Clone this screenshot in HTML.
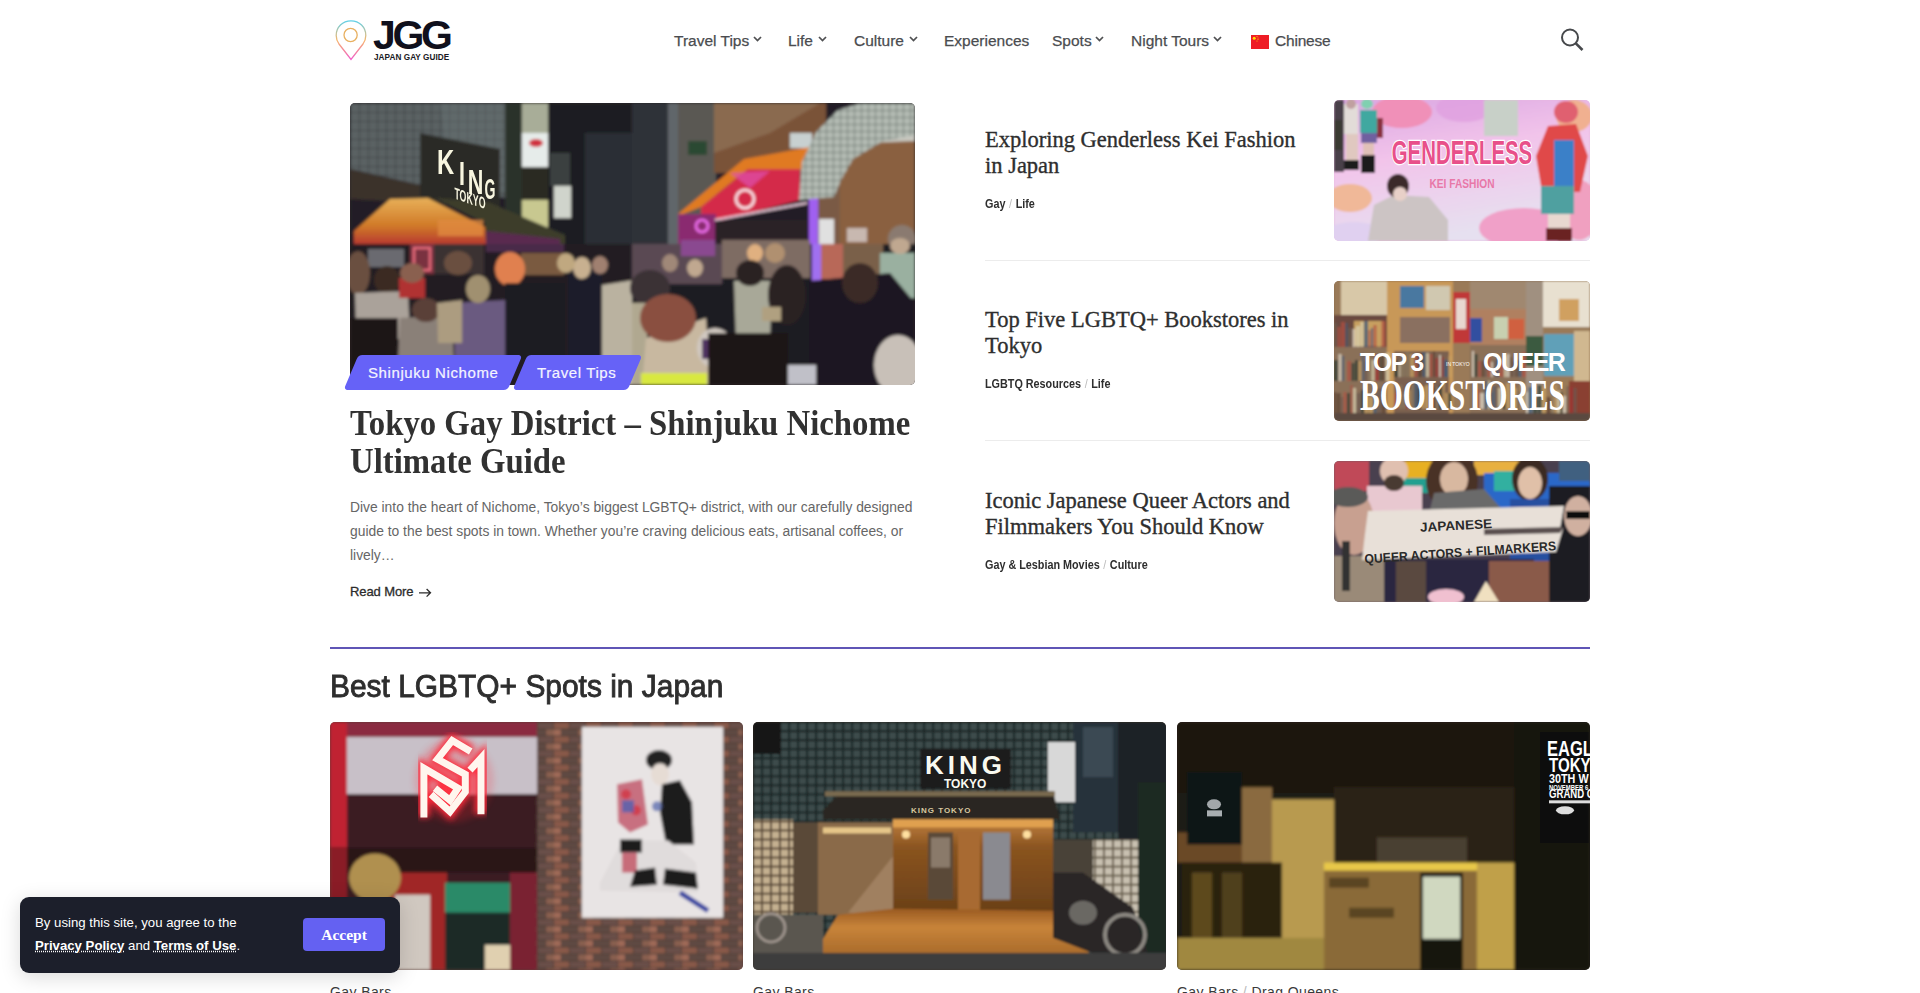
<!DOCTYPE html>
<html><head><meta charset="utf-8">
<style>
*{margin:0;padding:0;box-sizing:border-box}
html,body{width:1920px;height:993px;overflow:hidden;background:#fff}
body{font-family:"Liberation Sans",sans-serif;color:#333;position:relative}
.abs{position:absolute}
.nav{position:absolute;top:32px;font-size:15.5px;color:#4a4c4f;white-space:nowrap;line-height:18px;-webkit-text-stroke:0.25px #4a4c4f}
.chev{position:absolute;top:36px;width:9px;height:6px}
.ph{position:absolute;overflow:hidden;border-radius:5px;background:#333}
.ph > div{position:absolute}
.rt{position:absolute;left:985px;width:340px;font-family:"Liberation Serif",serif;font-size:22.5px;line-height:26px;color:#2e2e2e;-webkit-text-stroke:0.35px #2e2e2e;white-space:nowrap}
.meta{position:absolute;left:985px;font-size:12px;font-weight:700;color:#2e2e2e;white-space:nowrap;transform:scaleX(0.9);transform-origin:0 0;line-height:14px}
.meta i{font-style:normal;color:#bbb;font-weight:400;margin:0 4px}
.div{position:absolute;left:985px;width:605px;height:1px;background:#ececec}
.tag{position:absolute;top:355px;height:35px;background:#6662f7;transform:skewX(-23deg);border-radius:4px}
.tagt{position:absolute;top:364px;font-size:15px;color:#f4f4ff;letter-spacing:0.6px;white-space:nowrap;line-height:18px;-webkit-text-stroke:0.2px #f4f4ff}
.card{position:absolute;top:722px;width:413px;height:248px;border-radius:5px;overflow:hidden}
.cap{position:absolute;top:984px;font-size:14px;color:#3a3a3a;white-space:nowrap;letter-spacing:0.4px}
</style></head><body>

<!-- Logo -->
<svg class="abs" style="left:333px;top:18px" width="36" height="44" viewBox="0 0 36 44">
<defs><linearGradient id="lg" x1="0" y1="0" x2="0" y2="1">
<stop offset="0" stop-color="#5fd0e8"/><stop offset="0.5" stop-color="#f6b66a"/><stop offset="1" stop-color="#f05cc8"/></linearGradient></defs>
<path d="M18 2.8 C9.6 2.8 3.2 9.2 3.2 17.4 C3.2 20.6 4.2 23.4 6 26 L18 41.4 L30 26 C31.8 23.4 32.8 20.6 32.8 17.4 C32.8 9.2 26.4 2.8 18 2.8 Z" fill="none" stroke="url(#lg)" stroke-width="1.3"/>
<circle cx="17.6" cy="17" r="6.6" fill="none" stroke="#e8b060" stroke-width="1.3"/>
</svg>
<div class="abs" style="left:373px;top:12px;font-size:41px;font-weight:700;color:#10101c;letter-spacing:-3.4px;line-height:46px">JGG</div>
<div class="abs" style="left:374px;top:53px;font-size:8.2px;font-weight:700;color:#1a1a24;line-height:10px;letter-spacing:0.05px">JAPAN GAY GUIDE</div>

<!-- Nav -->
<div class="nav" style="left:674px">Travel Tips</div>
<div class="nav" style="left:788px">Life</div>
<div class="nav" style="left:854px">Culture</div>
<div class="nav" style="left:944px">Experiences</div>
<div class="nav" style="left:1052px">Spots</div>
<div class="nav" style="left:1131px">Night Tours</div>
<div class="nav" style="left:1275px;letter-spacing:-0.2px">Chinese</div>
<svg class="chev" style="left:753px" viewBox="0 0 9 6"><path d="M1 1 L4.5 4.6 L8 1" fill="none" stroke="#4f5052" stroke-width="1.7"/></svg>
<svg class="chev" style="left:818px" viewBox="0 0 9 6"><path d="M1 1 L4.5 4.6 L8 1" fill="none" stroke="#4f5052" stroke-width="1.7"/></svg>
<svg class="chev" style="left:909px" viewBox="0 0 9 6"><path d="M1 1 L4.5 4.6 L8 1" fill="none" stroke="#4f5052" stroke-width="1.7"/></svg>
<svg class="chev" style="left:1095px" viewBox="0 0 9 6"><path d="M1 1 L4.5 4.6 L8 1" fill="none" stroke="#4f5052" stroke-width="1.7"/></svg>
<svg class="chev" style="left:1213px" viewBox="0 0 9 6"><path d="M1 1 L4.5 4.6 L8 1" fill="none" stroke="#4f5052" stroke-width="1.7"/></svg>
<svg class="abs" style="left:1251px;top:35px" width="18" height="14" viewBox="0 0 18 14"><rect width="18" height="14" fill="#ee1c25"/><circle cx="3.2" cy="3.2" r="1.5" fill="#ffde00"/><circle cx="6" cy="1.6" r=".5" fill="#ffde00"/><circle cx="7" cy="3" r=".5" fill="#ffde00"/><circle cx="7" cy="4.6" r=".5" fill="#ffde00"/><circle cx="6" cy="6" r=".5" fill="#ffde00"/></svg>

<!-- Search -->
<svg class="abs" style="left:1558px;top:26px" width="28" height="28" viewBox="0 0 28 28"><circle cx="12" cy="11.5" r="8" fill="none" stroke="#46484b" stroke-width="2"/><path d="M17.8 17.4 L24.5 24" stroke="#46484b" stroke-width="2.6"/></svg>

<!-- Main photo -->
<div class="ph" id="mainph" style="left:350px;top:103px;width:565px;height:282px;background:#2a2628"><svg width="565" height="282" viewBox="0 0 565 282" style="position:absolute;left:0;top:0">
<defs><filter id="b0"><feGaussianBlur stdDeviation="0.5"/></filter><filter id="b1" x="-5%" y="-5%" width="110%" height="110%"><feGaussianBlur stdDeviation="1.6"/></filter>
<linearGradient id="awn" x1="0" y1="0" x2="0" y2="1"><stop offset="0" stop-color="#e8b058"/><stop offset="0.6" stop-color="#d07a28"/><stop offset="1" stop-color="#b83a30"/></linearGradient>
<pattern id="tile" width="9" height="9" patternUnits="userSpaceOnUse"><rect width="9" height="9" fill="#5a6264"/><path d="M0 0H9M0 0V9" stroke="#2e3234" stroke-width="1.2"/></pattern>
<pattern id="tile2" width="7" height="7" patternUnits="userSpaceOnUse"><rect width="7" height="7" fill="#b4bcb4"/><path d="M0 0H7M0 0V7" stroke="#3a4440" stroke-width="1.1"/></pattern>
</defs>
<g filter="url(#b1)">
<rect width="565" height="282" fill="#231f25"/>
<!-- left tile building -->
<polygon points="0,0 155,0 155,95 70,82 0,66" fill="url(#tile)"/>
<polygon points="90,0 155,0 155,90 100,80" fill="#6a7470" opacity=".45"/>
<polygon points="0,66 70,82 72,100 0,96" fill="#3a302c"/>
<!-- KING sign box -->
<polygon points="70,30 150,46 150,112 70,96" fill="#2c2c28"/>
<!-- center top -->
<rect x="155" y="0" width="18" height="141" fill="#2a302c"/>
<!-- vertical signs -->
<rect x="172" y="0" width="26" height="30" fill="#a8ad98"/>
<rect x="172" y="30" width="26" height="34" fill="#e6ecea"/>
<ellipse cx="186" cy="40" rx="7" ry="4" fill="#d03040"/>
<rect x="172" y="64" width="26" height="33" fill="#2a2c24"/>
<rect x="172" y="97" width="26" height="37" fill="#c8c890"/>
<!-- dark right bldg -->
<rect x="198" y="0" width="90" height="141" fill="#1b1d22"/>
<rect x="235" y="30" width="50" height="111" fill="#2b2f35"/>
<rect x="204" y="83" width="17" height="32" fill="#d0d4cc"/>
<rect x="200" y="50" width="20" height="33" fill="#3a4040"/>
<!-- awnings -->
<polygon points="85,95 140,100 215,132 215,145 135,145 135,120" fill="#3c3c2c"/>
<polygon points="4,128 40,96 78,95 135,124 136,141 4,141" fill="url(#awn)"/>
<rect x="88" y="117" width="45" height="16" fill="#e08a40" opacity=".8"/>
<polygon points="136,128 210,136 210,148 136,146" fill="#5a2a50"/>
<!-- TR: grey bldg -->
<rect x="282" y="0" width="46" height="141" fill="#2e3238"/>
<rect x="318" y="0" width="12" height="141" fill="#60666a"/>
<rect x="328" y="0" width="38" height="141" fill="#5a5852"/>
<rect x="338" y="38" width="19" height="14" fill="#2a4a30"/>
<!-- brick bldg -->
<rect x="364" y="0" width="112" height="70" fill="#7a5238"/>
<polygon points="364,0 470,0 420,30 364,50" fill="#8a6a50"/>
<rect x="440" y="30" width="22" height="15" fill="#c8d0d0"/>
<!-- orange awning -->
<polygon points="328,111 394,56 460,44 458,66 398,66 351,104 328,113" fill="#e07a22"/>
<!-- red sign -->
<polygon points="351,104 398,66 450,66 450,97 364,119 351,113" fill="#d42a4a"/>
<polygon points="380,70 420,68 400,85" fill="#e050b0" opacity=".7"/>
<circle cx="395" cy="96" r="9" fill="none" stroke="#fff0f4" stroke-width="2.5"/>
<rect x="328" y="111" width="38" height="30" fill="#8a2a70"/>
<circle cx="352" cy="123" r="6" fill="none" stroke="#f070f0" stroke-width="2.5"/>
<rect x="365" y="117" width="92" height="24" fill="#2c2228"/>
<path d="M365 117 L457 100" stroke="#f0d0e0" stroke-width="2"/>
<rect x="459" y="91" width="9" height="50" fill="#a060f0"/>
<!-- arch & brick -->
<rect x="468" y="36" width="97" height="106" fill="#8a6040"/>
<rect x="468" y="50" width="22" height="92" fill="#7a5a44"/>
<polygon points="515,14 565,10 565,38 515,40" fill="#c8c8c0"/>
<polygon points="449,97 452,59 466,29 488,7 511,0 565,0 565,32 533,38 503,56 491,77 484,94" fill="url(#tile2)"/>
<rect x="469" y="116" width="15" height="25" fill="#e0e0e0"/>
<rect x="497" y="125" width="20" height="14" fill="#c8b8b0"/>
<ellipse cx="552" cy="136" rx="14" ry="14" fill="#8a7a70"/>
<!-- BL crowd -->
<rect x="0" y="141" width="283" height="141" fill="#221c22"/>
<rect x="18" y="146" width="36" height="18" fill="#6a6a70"/>
<rect x="60" y="141" width="24" height="30" fill="#7a3040"/>
<rect x="64" y="145" width="16" height="22" fill="none" stroke="#f07080" stroke-width="2"/>
<rect x="84" y="141" width="50" height="30" fill="#3a3030"/>
<rect x="136" y="141" width="78" height="8" fill="#4a2a48"/>
<rect x="171" y="150" width="43" height="22" fill="#7a5a40"/>
<ellipse cx="160" cy="166" rx="15" ry="17" fill="#e08050"/>
<ellipse cx="37" cy="177" rx="13" ry="14" fill="#3a2a20"/>
<ellipse cx="8" cy="170" rx="12" ry="22" fill="#6a5040"/>
<polygon points="5,190 58,188 60,236 6,236" fill="#aaa29a"/>
<rect x="49" y="175" width="26" height="20" fill="#b03030"/>
<ellipse cx="62" cy="170" rx="12" ry="10" fill="#8a6050"/>
<polygon points="50,215 101,212 104,256 48,256" fill="#8a8078"/>
<ellipse cx="76" cy="207" rx="14" ry="12" fill="#5a4038"/>
<polygon points="103,200 156,197 158,256 105,256" fill="#6a5a80"/>
<ellipse cx="128" cy="186" rx="12" ry="14" fill="#a09070"/>
<polygon points="87,200 112,197 112,240 88,240" fill="#ac9c80"/>
<ellipse cx="108" cy="160" rx="14" ry="12" fill="#6a5040"/>
<polygon points="252,182 290,176 298,282 252,282" fill="#bab2a0"/>
<rect x="218" y="160" width="34" height="96" fill="#1e1e2a"/>
<ellipse cx="232" cy="165" rx="9" ry="11" fill="#c8b090"/>
<ellipse cx="216" cy="160" rx="9" ry="10" fill="#c0a880"/>
<ellipse cx="250" cy="162" rx="8" ry="9" fill="#a08070"/>
<rect x="0" y="215" width="48" height="67" fill="#1a1818"/>
<rect x="155" y="180" width="60" height="76" fill="#1e1a20"/>
<!-- BR crowd -->
<rect x="282" y="141" width="283" height="141" fill="#1e1a22"/>
<rect x="282" y="141" width="90" height="40" fill="#5a4a52"/><rect x="331" y="137" width="34" height="16" fill="#8a4a90"/><ellipse cx="320" cy="160" rx="8" ry="9" fill="#a08878"/><ellipse cx="345" cy="165" rx="8" ry="9" fill="#c0a890"/>
<rect x="372" y="137" width="88" height="38" fill="#7e6c64"/><ellipse cx="425" cy="150" rx="10" ry="10" fill="#b09070"/>
<ellipse cx="405" cy="150" rx="8" ry="9" fill="#e0b080"/>
<rect x="462" y="141" width="9" height="42" fill="#a070f0"/>
<rect x="471" y="141" width="22" height="35" fill="#b86858"/>
<rect x="493" y="141" width="40" height="50" fill="#7a6048"/>
<rect x="530" y="150" width="35" height="45" fill="#9ab0a0"/>
<ellipse cx="550" cy="143" rx="10" ry="8" fill="#c0a890"/>
<polygon points="384,178 422,178 420,240 386,240" fill="#a8a898"/>
<ellipse cx="400" cy="170" rx="14" ry="13" fill="#2a2424"/>
<ellipse cx="437" cy="192" rx="19" ry="30" fill="#2a2024"/><rect x="412" y="204" width="19" height="14" fill="#b0a080"/>
<polygon points="459,178 540,170 565,200 565,282 459,282" fill="#1a1620"/>
<ellipse cx="510" cy="180" rx="18" ry="20" fill="#3a2a26"/>
<ellipse cx="300" cy="185" rx="20" ry="18" fill="#3a3036"/>
<polygon points="282,200 297,200 297,282 282,282" fill="#b0a890"/>
<polygon points="296,235 356,215 360,282 292,282" fill="#c8b8a0"/>
<ellipse cx="318" cy="215" rx="28" ry="24" fill="#8a5040"/>
<ellipse cx="365" cy="245" rx="18" ry="20" fill="#d0c8c0"/>
<rect x="352" y="236" width="14" height="20" fill="#503060"/>
<rect x="291" y="270" width="66" height="12" fill="#d8e840"/>
<rect x="430" y="262" width="36" height="20" fill="#c0c0c8"/>
<ellipse cx="548" cy="262" rx="24" ry="30" fill="#c8c0b8"/>
<rect x="358" y="230" width="80" height="52" fill="#1a1618"/>
</g>
<!-- sharp sign text -->
<g filter="url(#b0)" fill="#f8f6e0" font-family="Liberation Sans" font-weight="700">
<text font-size="35" transform="translate(87 71.4) scale(0.68 1)">K</text>
<text font-size="34" transform="translate(109 82.3) scale(0.63 1)">I</text>
<text font-size="36" transform="translate(117.7 90.7) scale(0.6 1)">N</text>
<text font-size="30" transform="translate(134.6 95.5) scale(0.47 1)">G</text>
<text font-size="16" transform="translate(104.4 95.5) skewY(19) scale(0.55 1)">TOKYO</text>
</g>
</svg>
</div><!--/mainph-->

<div class="tag" style="left:351px;width:164px"></div>
<div class="tag" style="left:520px;width:115px"></div>
<div class="tagt" style="left:368px">Shinjuku Nichome</div>
<div class="tagt" style="left:537px">Travel Tips</div>

<div class="abs" style="left:350px;top:403.5px;width:700px;font-family:'Liberation Serif',serif;font-size:35.5px;font-weight:700;line-height:38.5px;color:#313131;transform:scaleX(0.9226);transform-origin:0 0;white-space:nowrap">Tokyo Gay District – Shinjuku Nichome<br>Ultimate Guide</div>
<div class="abs" style="left:350px;top:495px;width:600px;font-size:13.85px;line-height:24px;color:#666">Dive into the heart of Nichome, Tokyo’s biggest LGBTQ+ district, with our carefully designed<br>guide to the best spots in town. Whether you’re craving delicious eats, artisanal coffees, or<br>lively…</div>
<div class="abs" style="left:350px;top:584px;font-size:13px;color:#2c2c2c;white-space:nowrap;line-height:16px;-webkit-text-stroke:0.3px #2c2c2c;letter-spacing:-0.1px">Read More</div><svg class="abs" style="left:418px;top:587px" width="14" height="12" viewBox="0 0 14 12"><path d="M1 5.8 H12.3 M8.6 2 L12.5 5.8 L8.6 9.6" fill="none" stroke="#2c2c2c" stroke-width="1.3"/></svg>

<!-- Right list -->
<div class="rt" style="top:127px">Exploring Genderless Kei Fashion<br>in Japan</div>
<div class="meta" style="top:197px">Gay<i>/</i>Life</div>
<div class="ph" id="ph1" style="left:1334px;top:100px;width:256px;height:141px;background:#e8b8e0"><svg width="256" height="141" viewBox="0 0 256 141" style="position:absolute;left:0;top:0">
<defs><filter id="b2" x="-5%" y="-5%" width="110%" height="110%"><feGaussianBlur stdDeviation="1.3"/></filter>
<linearGradient id="pk" x1="0" y1="0" x2="0.3" y2="1"><stop offset="0" stop-color="#d9a6e2"/><stop offset="0.45" stop-color="#f2c4ea"/><stop offset="1" stop-color="#e6e0f0"/></linearGradient></defs>
<g filter="url(#b2)">
<rect width="256" height="141" fill="url(#pk)"/>
<ellipse cx="68" cy="12" rx="30" ry="16" fill="#f090b8"/>
<ellipse cx="130" cy="8" rx="28" ry="14" fill="#e0a0e0" opacity=".8"/>
<ellipse cx="190" cy="128" rx="45" ry="20" fill="#f0a0c8"/>
<ellipse cx="245" cy="110" rx="20" ry="30" fill="#f0a0c0"/>
<ellipse cx="20" cy="134" rx="30" ry="12" fill="#e0d0f0"/>
<!-- left people -->
<rect x="0" y="0" width="10" height="72" fill="#4a4048"/>
<rect x="0" y="20" width="8" height="30" fill="#3a3a30"/>
<rect x="10" y="4" width="14" height="30" fill="#e2dcd8"/>
<ellipse cx="17" cy="4" rx="5" ry="5" fill="#c0a0a0"/>
<rect x="12" y="34" width="12" height="26" fill="#e0c8c0"/>
<rect x="10" y="60" width="15" height="10" fill="#1e1e1e"/>
<ellipse cx="33" cy="4" rx="6" ry="5" fill="#80d0b0"/>
<rect x="26" y="10" width="17" height="23" fill="#40a8a0"/>
<rect x="27" y="33" width="16" height="10" fill="#7060a0"/>
<rect x="29" y="43" width="11" height="13" fill="#e0c0b8"/>
<rect x="27" y="55" width="14" height="18" fill="#1a1a1a"/>
<rect x="43" y="18" width="6" height="20" fill="#8a3040"/>
<!-- top center person -->
<rect x="150" y="0" width="34" height="36" fill="#c8d0c8"/>
<!-- hands -->
<ellipse cx="16" cy="98" rx="22" ry="14" fill="#f0b898"/>
<ellipse cx="240" cy="16" rx="18" ry="16" fill="#f0b090"/>
<!-- bottom center person -->
<polygon points="34,141 40,105 60,95 95,97 114,120 114,141" fill="#ccc4c4"/>
<ellipse cx="64" cy="86" rx="11" ry="12" fill="#3a2a2a"/>
<ellipse cx="66" cy="94" rx="7" ry="7" fill="#e8d0c8"/>
<!-- right person -->
<polygon points="202,56 214,26 242,24 254,56 246,92 208,92" fill="#e04848"/>
<rect x="220" y="40" width="20" height="46" fill="#3a80c8"/>
<ellipse cx="232" cy="12" rx="12" ry="11" fill="#e06070"/>
<rect x="207" y="86" width="33" height="28" fill="#50a0a0"/>
<rect x="214" y="114" width="22" height="14" fill="#e8d8d0"/>
<rect x="212" y="128" width="26" height="13" fill="#6a2020"/>
</g>
<g font-family="Liberation Sans" font-weight="700" text-anchor="middle">
<text x="128" y="64" font-size="34" fill="#e8508a" stroke="#fff" stroke-width="2.5" paint-order="stroke" transform="translate(128 0) scale(0.6 1) translate(-128 0)">GENDERLESS</text>
<text x="128" y="88" font-size="12" fill="#e878a8" transform="translate(128 0) scale(0.85 1) translate(-128 0)">KEI FASHION</text>
</g>
</svg>
</div><!--/ph1-->
<div class="div" style="top:260px"></div>

<div class="rt" style="top:307px">Top Five LGBTQ+ Bookstores in<br>Tokyo</div>
<div class="meta" style="top:377px">LGBTQ Resources<i>/</i>Life</div>
<div class="ph" id="ph2" style="left:1334px;top:281px;width:256px;height:140px;background:#8a6a4a"><svg width="256" height="140" viewBox="0 0 256 140" style="position:absolute;left:0;top:0">
<defs><filter id="b3" x="-5%" y="-5%" width="110%" height="110%"><feGaussianBlur stdDeviation="1.3"/></filter></defs>
<g filter="url(#b3)">
<rect width="256" height="140" fill="#9a7a58"/>
<rect x="0" y="0" width="56" height="34" fill="#d8c8a8"/><rect x="0" y="0" width="7" height="34" fill="#9a7a58"/>
<rect x="0" y="34" width="56" height="34" fill="#6a4a40"/>
<rect x="20" y="40" width="30" height="25" fill="#c8a060"/>
<rect x="0" y="66" width="56" height="74" fill="#8a7058"/>
<rect x="53" y="0" width="66" height="140" fill="#c89858"/>
<rect x="66" y="5" width="24" height="22" fill="#4a78a0"/>
<rect x="92" y="5" width="24" height="24" fill="#d0c8b0"/>
<rect x="66" y="36" width="50" height="26" fill="#8a7060"/>
<rect x="60" y="70" width="55" height="70" fill="#7a6050"/>
<rect x="119" y="11" width="17" height="51" fill="#c03838"/>
<rect x="122" y="18" width="10" height="30" fill="#e8d8d0"/>
<rect x="136" y="0" width="56" height="28" fill="#a08870"/>
<rect x="136" y="28" width="56" height="36" fill="#b08060"/>
<rect x="136" y="37" width="12" height="24" fill="#3050a0"/>
<rect x="160" y="36" width="14" height="22" fill="#c8d0b0"/>
<rect x="174" y="38" width="16" height="20" fill="#d06040"/>
<rect x="136" y="64" width="56" height="76" fill="#8a7058"/>
<rect x="192" y="0" width="17" height="140" fill="#a09080"/>
<rect x="192" y="55" width="17" height="30" fill="#3a5a40"/>
<rect x="209" y="0" width="47" height="46" fill="#e8e0d0"/>
<rect x="225" y="18" width="20" height="22" fill="#d0a060"/>
<rect x="210" y="53" width="30" height="42" fill="#60a0b8"/>
<rect x="240" y="50" width="16" height="50" fill="#d0b890"/>
<rect x="235" y="100" width="21" height="40" fill="#8a4030"/>
<g opacity="0.75"><rect x="0" y="42" width="3" height="24" fill="#6a5a50"/><rect x="3.5" y="46" width="3" height="20" fill="#b05040"/><rect x="7.0" y="41" width="4" height="25" fill="#b05040"/><rect x="11.5" y="42" width="2" height="24" fill="#3a5a7a"/><rect x="14.0" y="47" width="4" height="19" fill="#6a5a50"/><rect x="18.5" y="48" width="3" height="18" fill="#e0d8c8"/><rect x="22.0" y="45" width="4" height="21" fill="#d8d0b0"/><rect x="26.5" y="41" width="3" height="25" fill="#d8d0b0"/><rect x="30.0" y="40" width="4" height="26" fill="#3a5a7a"/><rect x="34.5" y="49" width="2" height="17" fill="#b05040"/><rect x="37.0" y="47" width="2" height="19" fill="#3a5a7a"/><rect x="39.5" y="44" width="3" height="22" fill="#b05040"/><rect x="43.0" y="40" width="4" height="26" fill="#c8a060"/><rect x="47.5" y="40" width="4" height="26" fill="#b05040"/><rect x="60" y="79" width="4" height="17" fill="#2a3a30"/><rect x="64.5" y="81" width="2" height="15" fill="#d8d0b0"/><rect x="67.0" y="78" width="4" height="18" fill="#8a7a60"/><rect x="71.5" y="71" width="4" height="25" fill="#8a7a60"/><rect x="76.0" y="73" width="4" height="23" fill="#c8a060"/><rect x="80.5" y="73" width="3" height="23" fill="#b05040"/><rect x="84.0" y="72" width="4" height="24" fill="#5a4030"/><rect x="88.5" y="71" width="3" height="25" fill="#3a5a7a"/><rect x="92.0" y="72" width="3" height="24" fill="#d8d0b0"/><rect x="95.5" y="73" width="3" height="23" fill="#b05040"/><rect x="99.0" y="70" width="2" height="26" fill="#5a4030"/><rect x="101.5" y="77" width="3" height="19" fill="#a03030"/><rect x="105.0" y="74" width="2" height="22" fill="#e0d8c8"/><rect x="107.5" y="76" width="2" height="20" fill="#a03030"/><rect x="110.0" y="79" width="4" height="17" fill="#3a5a7a"/><rect x="114.5" y="75" width="3" height="21" fill="#c8a060"/><rect x="60" y="112" width="2" height="16" fill="#b05040"/><rect x="62.5" y="106" width="2" height="22" fill="#b05040"/><rect x="65.0" y="104" width="3" height="24" fill="#8a7a60"/><rect x="68.5" y="112" width="3" height="16" fill="#8a7a60"/><rect x="72.0" y="111" width="2" height="17" fill="#a03030"/><rect x="74.5" y="109" width="2" height="19" fill="#c8a060"/><rect x="77.0" y="103" width="3" height="25" fill="#8a7a60"/><rect x="80.5" y="101" width="3" height="27" fill="#3a5a7a"/><rect x="84.0" y="107" width="3" height="21" fill="#2a3a30"/><rect x="87.5" y="106" width="3" height="22" fill="#c8a060"/><rect x="91.0" y="104" width="4" height="24" fill="#c8a060"/><rect x="95.5" y="103" width="2" height="25" fill="#6a5a50"/><rect x="98.0" y="106" width="3" height="22" fill="#5a4030"/><rect x="101.5" y="106" width="3" height="22" fill="#8a7a60"/><rect x="105.0" y="104" width="3" height="24" fill="#2a3a30"/><rect x="108.5" y="100" width="2" height="28" fill="#c8a060"/><rect x="111.0" y="112" width="3" height="16" fill="#c8a060"/><rect x="114.5" y="112" width="3" height="16" fill="#2a3a30"/><rect x="0" y="79" width="4" height="21" fill="#2a3a30"/><rect x="4.5" y="73" width="3" height="27" fill="#e0d8c8"/><rect x="8.0" y="75" width="2" height="25" fill="#3a5a7a"/><rect x="10.5" y="79" width="2" height="21" fill="#8a7a60"/><rect x="13.0" y="80" width="4" height="20" fill="#b05040"/><rect x="17.5" y="82" width="3" height="18" fill="#2a3a30"/><rect x="21.0" y="79" width="3" height="21" fill="#2a3a30"/><rect x="24.5" y="80" width="3" height="20" fill="#c8a060"/><rect x="28.0" y="72" width="2" height="28" fill="#3a5a7a"/><rect x="30.5" y="80" width="3" height="20" fill="#6a5a50"/><rect x="34.0" y="74" width="3" height="26" fill="#8a7a60"/><rect x="37.5" y="79" width="3" height="21" fill="#d8d0b0"/><rect x="41.0" y="74" width="4" height="26" fill="#a03030"/><rect x="45.5" y="75" width="2" height="25" fill="#2a3a30"/><rect x="48.0" y="74" width="3" height="26" fill="#5a4030"/><rect x="51.5" y="72" width="4" height="28" fill="#d8d0b0"/><rect x="0" y="111" width="2" height="21" fill="#5a4030"/><rect x="2.5" y="112" width="4" height="20" fill="#5a4030"/><rect x="7.0" y="116" width="2" height="16" fill="#6a5a50"/><rect x="9.5" y="111" width="3" height="21" fill="#b05040"/><rect x="13.0" y="112" width="3" height="20" fill="#2a3a30"/><rect x="16.5" y="104" width="2" height="28" fill="#b05040"/><rect x="19.0" y="107" width="3" height="25" fill="#d8d0b0"/><rect x="22.5" y="112" width="4" height="20" fill="#6a5a50"/><rect x="27.0" y="109" width="3" height="23" fill="#2a3a30"/><rect x="30.5" y="112" width="4" height="20" fill="#c8a060"/><rect x="35.0" y="116" width="4" height="16" fill="#c8a060"/><rect x="39.5" y="113" width="3" height="19" fill="#3a5a7a"/><rect x="43.0" y="107" width="4" height="25" fill="#6a5a50"/><rect x="47.5" y="108" width="4" height="24" fill="#5a4030"/><rect x="138" y="70" width="2" height="26" fill="#e0d8c8"/><rect x="140.5" y="73" width="3" height="23" fill="#2a3a30"/><rect x="144.0" y="80" width="3" height="16" fill="#b05040"/><rect x="147.5" y="80" width="3" height="16" fill="#5a4030"/><rect x="151.0" y="81" width="2" height="15" fill="#6a5a50"/><rect x="153.5" y="75" width="3" height="21" fill="#b05040"/><rect x="157.0" y="81" width="2" height="15" fill="#e0d8c8"/><rect x="159.5" y="79" width="2" height="17" fill="#6a5a50"/><rect x="162.0" y="78" width="3" height="18" fill="#3a5a7a"/><rect x="165.5" y="81" width="4" height="15" fill="#b05040"/><rect x="170.0" y="76" width="2" height="20" fill="#d8d0b0"/><rect x="172.5" y="73" width="3" height="23" fill="#e0d8c8"/><rect x="176.0" y="76" width="2" height="20" fill="#5a4030"/><rect x="178.5" y="80" width="3" height="16" fill="#6a5a50"/><rect x="182.0" y="79" width="2" height="17" fill="#5a4030"/><rect x="184.5" y="79" width="3" height="17" fill="#3a5a7a"/><rect x="188.0" y="71" width="4" height="25" fill="#b05040"/><rect x="138" y="112" width="4" height="16" fill="#8a7a60"/><rect x="142.5" y="108" width="3" height="20" fill="#b05040"/><rect x="146.0" y="112" width="4" height="16" fill="#e0d8c8"/><rect x="150.5" y="100" width="3" height="28" fill="#3a5a7a"/><rect x="154.0" y="100" width="2" height="28" fill="#d8d0b0"/><rect x="156.5" y="111" width="2" height="17" fill="#3a5a7a"/><rect x="159.0" y="105" width="2" height="23" fill="#3a5a7a"/><rect x="161.5" y="104" width="2" height="24" fill="#6a5a50"/><rect x="164.0" y="107" width="4" height="21" fill="#d8d0b0"/><rect x="168.5" y="111" width="3" height="17" fill="#2a3a30"/><rect x="172.0" y="102" width="4" height="26" fill="#c8a060"/><rect x="176.5" y="107" width="3" height="21" fill="#8a7a60"/><rect x="180.0" y="107" width="3" height="21" fill="#c8a060"/><rect x="183.5" y="110" width="2" height="18" fill="#6a5a50"/><rect x="186.0" y="101" width="2" height="27" fill="#c8a060"/><rect x="188.5" y="103" width="2" height="25" fill="#d8d0b0"/><rect x="192" y="111" width="2" height="21" fill="#e0d8c8"/><rect x="194.5" y="106" width="4" height="26" fill="#3a5a7a"/><rect x="199.0" y="116" width="4" height="16" fill="#2a3a30"/><rect x="203.5" y="104" width="4" height="28" fill="#2a3a30"/><rect x="208.0" y="105" width="4" height="27" fill="#c8a060"/><rect x="212.5" y="116" width="4" height="16" fill="#5a4030"/><rect x="217.0" y="108" width="3" height="24" fill="#8a7a60"/><rect x="220.5" y="104" width="2" height="28" fill="#c8a060"/><rect x="223.0" y="110" width="3" height="22" fill="#d8d0b0"/><rect x="226.5" y="111" width="2" height="21" fill="#2a3a30"/><rect x="229.0" y="115" width="3" height="17" fill="#e0d8c8"/><rect x="232.5" y="105" width="2" height="27" fill="#6a5a50"/><rect x="235.0" y="106" width="4" height="26" fill="#a03030"/><rect x="239.5" y="107" width="3" height="25" fill="#6a5a50"/></g>
<rect x="0" y="132" width="256" height="8" fill="#5a4a40"/>
</g>
<g fill="#fff" font-weight="700">
<text x="26" y="90" font-family="Liberation Sans" font-size="25" letter-spacing="-1.5" transform="translate(26 0) scale(0.98 1) translate(-26 0)">TOP 3</text>
<text x="112" y="85" font-family="Liberation Sans" font-size="5" font-weight="400">IN TOKYO</text>
<text x="149" y="90" font-family="Liberation Sans" font-size="25" letter-spacing="-1.5">QUEER</text>
<text x="26" y="129" font-family="Liberation Serif" font-size="44" font-weight="700" textLength="205" lengthAdjust="spacingAndGlyphs">BOOKSTORES</text>
</g>
</svg>
</div><!--/ph2-->
<div class="div" style="top:440px"></div>

<div class="rt" style="top:488px">Iconic Japanese Queer Actors and<br>Filmmakers You Should Know</div>
<div class="meta" style="top:558px">Gay &amp; Lesbian Movies<i>/</i>Culture</div>
<div class="ph" id="ph3" style="left:1334px;top:461px;width:256px;height:141px;background:#6a5a60"><svg width="256" height="141" viewBox="0 0 256 141" style="position:absolute;left:0;top:0">
<defs><filter id="b4" x="-5%" y="-5%" width="110%" height="110%"><feGaussianBlur stdDeviation="1.3"/></filter></defs>
<g filter="url(#b4)">
<rect width="256" height="141" fill="#4a4050"/>
<rect x="60" y="0" width="40" height="17" fill="#e8b020"/>
<rect x="60" y="17" width="40" height="15" fill="#20a090"/>
<rect x="140" y="0" width="60" height="14" fill="#e8b040"/>
<rect x="150" y="12" width="106" height="36" fill="#2a68c8"/>
<rect x="160" y="10" width="30" height="20" fill="#30b0a0"/>
<rect x="225" y="0" width="31" height="20" fill="#406080"/>
<rect x="0" y="0" width="35" height="30" fill="#c04858"/>
<rect x="33" y="25" width="55" height="33" fill="#e8c8d0"/>
<ellipse cx="60" cy="10" rx="14" ry="14" fill="#e0c0b0"/>
<ellipse cx="60" cy="22" rx="10" ry="8" fill="#4a3a30"/>
<ellipse cx="118" cy="20" rx="26" ry="30" fill="#4a3028"/>
<ellipse cx="120" cy="18" rx="14" ry="17" fill="#d8b8a0"/>
<polygon points="95,53 100,32 150,28 172,53" fill="#6a6a6a"/>
<ellipse cx="196" cy="18" rx="18" ry="22" fill="#3a2a22"/>
<ellipse cx="196" cy="22" rx="12" ry="16" fill="#e0c0a8"/>
<rect x="176" y="38" width="50" height="103" fill="#2850a0"/>
<ellipse cx="20" cy="62" rx="20" ry="32" fill="#c8a090"/>
<ellipse cx="14" cy="36" rx="20" ry="10" fill="#5a5a58"/>
<rect x="0" y="95" width="58" height="46" fill="#9a8a78"/>
<rect x="8" y="80" width="8" height="50" fill="#303030"/>
<rect x="50" y="98" width="150" height="43" fill="#2a2840"/>
<rect x="62" y="100" width="30" height="41" fill="#5a4840"/>
<rect x="155" y="100" width="60" height="41" fill="#8a5a4a"/>
<polygon points="140,141 152,120 165,141" fill="#f0e0c0"/>
<ellipse cx="112" cy="136" rx="18" ry="8" fill="#f0c0d0"/>
<rect x="215" y="25" width="41" height="116" fill="#1a1a20"/>
<ellipse cx="244" cy="55" rx="14" ry="20" fill="#d0b0a0"/>
<rect x="232" y="50" width="24" height="8" fill="#101010"/>
<polygon points="34,50 230,45 226,68 160,70 229,68 222,91 28,99 31,73" fill="#e8e0d8"/><polygon points="150,68 230,66 226,72 150,74" fill="#5a5050"/>
</g>
<g fill="#2a2a2a" font-family="Liberation Sans" font-weight="700">
<text x="86" y="69" font-size="13" textLength="72" lengthAdjust="spacingAndGlyphs" transform="rotate(-3 120 64)">JAPANESE</text>
<text x="30" y="96" font-size="13" textLength="192" lengthAdjust="spacingAndGlyphs" transform="rotate(-4 125 88)">QUEER ACTORS + FILMARKERS</text>
</g>
</svg>
</div><!--/ph3-->

<!-- Section -->
<div class="abs" style="left:330px;top:647px;width:1260px;height:2px;background:#5f55b6"></div>
<div class="abs" style="left:330px;top:664.5px;font-size:32px;color:#2e2e2e;white-space:nowrap;line-height:42px;transform:scaleX(0.935);transform-origin:0 0;-webkit-text-stroke:0.9px #2e2e2e">Best LGBTQ+ Spots in Japan</div>

<div class="card" id="c1" style="left:330px;background:#5a3a38"><svg width="413" height="248" viewBox="0 0 413 247" preserveAspectRatio="none" style="position:absolute;left:0;top:0">
<defs><filter id="b5" x="-5%" y="-5%" width="110%" height="110%"><feGaussianBlur stdDeviation="1.5"/></filter>
<filter id="glow"><feGaussianBlur stdDeviation="3"/></filter>
<pattern id="brk" width="32" height="14" patternUnits="userSpaceOnUse"><rect width="32" height="14" fill="#4a3a34"/><rect x="0" y="0.5" width="15" height="6" fill="#8a5a48"/><rect x="16" y="0.5" width="15" height="6" fill="#6a5048"/><rect x="-8" y="7.5" width="15" height="6" fill="#a06a58"/><rect x="8" y="7.5" width="15" height="6" fill="#5e4a42"/><rect x="24" y="7.5" width="15" height="6" fill="#8a6050"/></pattern></defs>
<g filter="url(#b5)">
<rect width="413" height="247" fill="#3a1a22"/>
<rect x="0" y="0" width="207" height="15" fill="#8a2a40"/>
<rect x="17" y="15" width="190" height="57" fill="#c8c0c8"/>
<rect x="0" y="0" width="17" height="125" fill="#c02030"/>
<rect x="17" y="72" width="190" height="53" fill="#3a1a24"/>
<rect x="17" y="125" width="190" height="25" fill="#2a1418"/>
<rect x="57" y="150" width="60" height="97" fill="#a02828"/>
<rect x="65" y="172" width="35" height="75" fill="#d0c8c0"/>
<ellipse cx="45" cy="155" rx="26" ry="24" fill="#b09050"/>
<rect x="115" y="160" width="65" height="30" fill="#2a8a68"/>
<rect x="115" y="190" width="65" height="57" fill="#1a2a28"/>
<rect x="155" y="222" width="25" height="25" fill="#e0d0b0"/>
<rect x="180" y="150" width="27" height="97" fill="#7a2030"/>
<rect x="0" y="125" width="17" height="122" fill="#8a1a28"/>
<!-- right -->
<rect x="207" y="0" width="206" height="247" fill="url(#brk)"/>
<rect x="252" y="5" width="141" height="190" fill="#e8e4e4"/>
<ellipse cx="329" cy="38" rx="13" ry="10" fill="#222"/>
<ellipse cx="330" cy="52" rx="9" ry="11" fill="#e6dcd4"/>
<polygon points="332,62 350,58 362,80 364,122 336,122 330,90" fill="#1e1e1e"/>
<polygon points="287,62 312,57 318,102 300,110 288,100" fill="#c87080"/>
<circle cx="296" cy="72" r="5" fill="#d04050"/><circle cx="306" cy="88" r="5" fill="#d04050"/>
<rect x="292" y="78" width="12" height="12" fill="#5060b0" opacity=".8"/>
<circle cx="327" cy="84" r="5" fill="#6070b0" opacity=".8"/>
<polygon points="270,160 292,118 338,118 366,140 368,170 270,168" fill="#e0dcdc"/>
<polygon points="290,117 312,117 312,130 290,130" fill="#1e1e1e"/>
<polygon points="292,130 307,130 307,150 292,150" fill="#c05060" opacity=".8"/>
<polygon points="305,148 325,145 327,162 300,164" fill="#1e1e1e"/>
<polygon points="335,146 366,150 368,166 333,162" fill="#1e1e1e"/>
<path d="M350 170 L378 188" stroke="#3040a0" stroke-width="5"/>
</g>
<ellipse cx="124" cy="58" rx="40" ry="42" fill="#ff2030" opacity=".18" filter="url(#glow)"/>
<g filter="url(#glow)" stroke="#ff2a3a" stroke-width="12" fill="none"><path d="M140.7,29.4 L122.2,18.5 L107.5,37 L135.3,52.2 L135.3,69.6 L120,89.2 L101,72"/><path d="M93.9,95 L93.9,46 L128,66 L120,78 L105,66"/><path d="M151,92 L151,36 L140,48"/></g>
<g stroke="#fff6ee" stroke-width="7" fill="none" stroke-linejoin="miter"><path d="M140.7,29.4 L122.2,18.5 L107.5,37 L135.3,52.2 L135.3,69.6 L120,89.2 L101,72"/><path d="M93.9,95 L93.9,46 L128,66 L120,78 L105,66"/><path d="M151,92 L151,36 L140,48"/></g>
</svg>
</div><!--/c1-->
<div class="card" id="c2" style="left:753px;background:#3a3028"><svg width="414" height="248" viewBox="0 0 414 247" preserveAspectRatio="none" style="position:absolute;left:0;top:0">
<defs><filter id="b6" x="-5%" y="-5%" width="110%" height="110%"><feGaussianBlur stdDeviation="1.3"/></filter>
<pattern id="tl3" width="9" height="9" patternUnits="userSpaceOnUse"><rect width="9" height="9" fill="#1e2828"/><rect x="1.2" y="1.2" width="6.8" height="6.8" fill="#3c4c4c"/></pattern>
<pattern id="tl4" width="9" height="9" patternUnits="userSpaceOnUse"><rect width="9" height="9" fill="#5a4a38"/><rect x="1" y="1" width="7" height="7" fill="#c4b090"/></pattern>
<pattern id="tl5" width="9" height="9" patternUnits="userSpaceOnUse"><rect width="9" height="9" fill="#6a6050"/><rect x="1" y="1" width="7" height="7" fill="#c8c0b0"/></pattern>
<linearGradient id="deck" x1="0" y1="0" x2="0" y2="1"><stop offset="0" stop-color="#9a5a22"/><stop offset="0.4" stop-color="#c8843a"/><stop offset="1" stop-color="#a86a2a"/></linearGradient>
<linearGradient id="sf" x1="0" y1="0" x2="0" y2="1"><stop offset="0" stop-color="#c08040"/><stop offset="0.3" stop-color="#8a5420"/><stop offset="1" stop-color="#6a4018"/></linearGradient></defs>
<g filter="url(#b6)">
<rect width="414" height="247" fill="url(#tl3)"/>
<rect x="0" y="0" width="28" height="32" fill="#141818"/>
<rect x="320" y="0" width="94" height="110" fill="#26323a"/>
<rect x="330" y="5" width="30" height="50" fill="#3a4a52"/>
<rect x="365" y="0" width="49" height="120" fill="#1a2228"/>
<rect x="167" y="27" width="91" height="40" fill="#1c1c1c"/>
<rect x="295" y="20" width="27" height="60" fill="#d8d8d8"/>
<polygon points="70,88 88,69 300,69 307,97 70,97" fill="#2a2620"/>
<rect x="72" y="69" width="230" height="5" fill="#7a6a50"/>
<rect x="0" y="97" width="40" height="95" fill="url(#tl4)"/>
<rect x="40" y="100" width="30" height="90" fill="#5a4838"/>
<rect x="65" y="100" width="78" height="92" fill="#8a6a48"/>
<rect x="70" y="105" width="68" height="6" fill="#f0d090" opacity=".9"/>
<polygon points="95,190 143,130 143,192" fill="#a08060"/>
<rect x="140" y="97" width="160" height="93" fill="url(#sf)"/>
<rect x="140" y="97" width="160" height="8" fill="#e0a050"/>
<rect x="175" y="110" width="25" height="67" fill="#5a4838"/>
<rect x="178" y="115" width="19" height="30" fill="#8a7a6a"/>
<rect x="230" y="110" width="27" height="67" fill="#8a8a90"/>
<rect x="205" y="108" width="22" height="80" fill="#a86a30"/>
<circle cx="153" cy="112" r="4" fill="#ffe0a0"/><circle cx="274" cy="112" r="4" fill="#ffe0a0"/>
<polygon points="60,232 85,192 140,186 300,188 338,232" fill="url(#deck)"/>
<rect x="300" y="117" width="40" height="60" fill="#4a4238"/>
<rect x="340" y="117" width="45" height="80" fill="url(#tl5)"/>
<rect x="385" y="60" width="29" height="187" fill="#1e2a24"/>
<polygon points="300,150 330,150 380,185 395,232 345,232 300,215" fill="#2a2828"/>
<ellipse cx="372" cy="212" rx="20" ry="20" fill="none" stroke="#8a8680" stroke-width="4"/>
<ellipse cx="330" cy="190" rx="14" ry="12" fill="#6a6864"/>
<rect x="0" y="192" width="70" height="40" fill="#5a5650"/>
<ellipse cx="18" cy="205" rx="14" ry="14" fill="none" stroke="#9a9088" stroke-width="3"/>
<rect x="0" y="230" width="414" height="17" fill="#3c3c3c"/>
</g>
<g fill="#fafaf0" font-family="Liberation Sans" font-weight="700">
<text x="172" y="52" font-size="26" letter-spacing="4">KING</text>
<text x="191" y="66" font-size="12">TOKYO</text>
<text x="158" y="91" font-size="8" fill="#d8c8a0" letter-spacing="1">KING TOKYO</text>
</g>
</svg>
</div><!--/c2-->
<div class="card" id="c3" style="left:1177px;background:#2a2418"><svg width="413" height="248" viewBox="0 0 413 247" preserveAspectRatio="none" style="position:absolute;left:0;top:0">
<defs><filter id="b7" x="-5%" y="-5%" width="110%" height="110%"><feGaussianBlur stdDeviation="1.5"/></filter></defs>
<g filter="url(#b7)">
<rect width="413" height="247" fill="#1e1a12"/>
<rect x="0" y="0" width="340" height="70" fill="#1c1810"/>
<rect x="0" y="110" width="95" height="30" fill="#6a4a28"/>
<rect x="65" y="65" width="30" height="75" fill="#8a6a40"/>
<rect x="95" y="77" width="62" height="140" fill="#b89a50"/>
<rect x="10" y="50" width="55" height="72" fill="#101418"/>
<rect x="5" y="140" width="100" height="97" fill="#2a2010"/>
<rect x="15" y="150" width="20" height="70" fill="#6a5420" opacity=".8"/>
<rect x="45" y="150" width="20" height="70" fill="#5a4820" opacity=".8"/>
<rect x="157" y="65" width="180" height="77" fill="#2a2418"/>
<rect x="200" y="115" width="90" height="25" fill="#4a4030"/>
<rect x="300" y="140" width="37" height="107" fill="#c0a048"/>
<rect x="0" y="215" width="147" height="32" fill="#a08840"/>
<rect x="147" y="142" width="153" height="105" fill="#8a6a38"/>
<rect x="147" y="140" width="153" height="8" fill="#e8c848"/>
<rect x="152" y="155" width="40" height="10" fill="#5a4420"/>
<rect x="172" y="185" width="45" height="10" fill="#5a4420"/>
<rect x="243" y="150" width="43" height="97" fill="#141410"/>
<rect x="246" y="154" width="37" height="62" fill="#d0d8c0"/>
<rect x="337" y="0" width="76" height="247" fill="#141410"/>
<rect x="363" y="10" width="50" height="110" fill="#0a0a0a"/>
</g>
<ellipse cx="37" cy="82" rx="7" ry="5" fill="#c8ccd0" opacity=".8"/><rect x="30" y="88" width="15" height="6" fill="#d0d4d8" opacity=".8"/>
<g fill="#fff" font-family="Liberation Sans" font-weight="700">
<text x="0" y="0" font-size="22" transform="translate(370 34) scale(0.75 1)">EAGLE</text>
<text x="0" y="0" font-size="21" transform="translate(372 50) scale(0.72 1)">TOKYO</text>
<text x="0" y="0" font-size="13.5" transform="translate(372 61) scale(0.8 1)">30TH W</text>
<text x="0" y="0" font-size="7" transform="translate(372 68) scale(0.85 1)">NOVEMBER 6</text>
<text x="0" y="0" font-size="12" transform="translate(372 76) scale(0.8 1)">GRAND O</text>
<rect x="372" y="78" width="41" height="3" fill="#ddd"/>
<ellipse cx="388" cy="88" rx="9" ry="4" fill="#ddd"/>
</g>
</svg>
</div><!--/c3-->
<div class="cap" style="left:330px">Gay Bars</div>
<div class="cap" style="left:753px">Gay Bars</div>
<div class="cap" style="left:1177px">Gay Bars <span style="color:#bbb">/</span> Drag Queens</div>

<!-- Cookie -->
<div class="abs" style="left:20px;top:897px;width:380px;height:76px;background:#1c1f2b;border-radius:9px;box-shadow:0 4px 20px rgba(0,0,0,.15)"></div>
<div class="abs" style="left:35px;top:911px;font-size:13.2px;color:#fff;line-height:23px;white-space:nowrap">By using this site, you agree to the<br><b style="text-decoration:underline dotted">Privacy Policy</b> and <b style="text-decoration:underline dotted">Terms of Use</b>.</div>
<div class="abs" style="left:303px;top:918px;width:82px;height:33px;background:#6461f2;border-radius:4px;color:#fff;font-family:'Liberation Serif',serif;font-size:15.5px;font-weight:700;text-align:center;line-height:33px">Accept</div>

</body></html>
